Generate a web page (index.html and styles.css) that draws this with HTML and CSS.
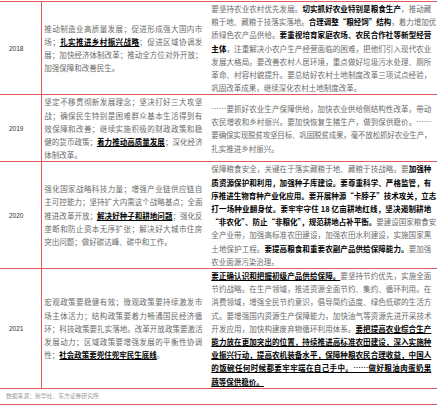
FILE: index.html
```html
<!DOCTYPE html>
<html lang="zh-CN">
<head>
<meta charset="utf-8">
<link rel="stylesheet" href="styles.css">
</head>
<body>
<div class="tbl">
  <div class="row">
    <div class="yr">2018</div>
    <div class="lc">
      <span class="ln">推动制造业高质量发展；促进形成强大国内市</span>
      <span class="ln">场；<strong class="b u">扎实推进乡村振兴战略</strong>；促进区域协调发</span>
      <span class="ln t">展；加快经济体制改革；推动全方位对外开放；</span>
      <span class="ln e">加强保障和改善民生。</span>
    </div>
    <div class="rc">
      <span class="ln">要坚持农业农村优先发展。<strong class="b">切实抓好农业特别是粮食生产</strong>，推动藏</span>
      <span class="ln">粮于地、藏粮于技落实落地。<strong class="b">合理调整“粮经饲”结构</strong>，着力增加优</span>
      <span class="ln">质绿色农产品供给。<strong class="b">要重视培育家庭农场、农民合作社等新型经营</strong></span>
      <span class="ln"><strong class="b">主体</strong>，注重解决小农户生产经营面临的困难，把他们引入现代农业</span>
      <span class="ln">发展大格局。要改善农村人居环境，重点做好垃圾污水处理、厕所</span>
      <span class="ln">革命、村容村貌提升。要总结好农村土地制度改革三项试点经验，</span>
      <span class="ln e">巩固改革成果，继续深化农村土地制度改革。</span>
    </div>
  </div>
  <div class="row">
    <div class="yr">2019</div>
    <div class="lc">
      <span class="ln">坚定不移贯彻新发展理念；坚决打好三大攻坚</span>
      <span class="ln">战；确保民生特别是困难群众基本生活得到有</span>
      <span class="ln">效保障和改善；继续实施积极的财政政策和稳</span>
      <span class="ln t">健的货币政策；<strong class="b u">着力推动高质量发展</strong>；深化经济</span>
      <span class="ln e">体制改革。</span>
    </div>
    <div class="rc">
      <span class="ln">……要抓好农业生产保障供给，加快农业供给侧结构性改革，带动</span>
      <span class="ln">农民增收和乡村振兴。要加快恢复生猪生产，做到保供稳价。……</span>
      <span class="ln t">要确保实现脱贫攻坚目标、巩固脱贫成果，毫不放松抓好农业生产，</span>
      <span class="ln e">扎实推进乡村振兴。</span>
    </div>
  </div>
  <div class="row">
    <div class="yr">2020</div>
    <div class="lc">
      <span class="ln">强化国家战略科技力量；增强产业链供应链自</span>
      <span class="ln t">主可控能力；坚持扩大内需这个战略基点；全面</span>
      <span class="ln t">推进改革开放；<strong class="b u">解决好种子和耕地问题</strong>；强化反</span>
      <span class="ln">垄断和防止资本无序扩张；解决好大城市住房</span>
      <span class="ln e">突出问题；做好碳达峰、碳中和工作。</span>
    </div>
    <div class="rc">
      <span class="ln">保障粮食安全，关键在于落实藏粮于地、藏粮于技战略。要<strong class="b">加强种</strong></span>
      <span class="ln"><strong class="b">质资源保护和利用，加强种子库建设。要尊重科学、严格监管，有</strong></span>
      <span class="ln"><strong class="b">序推进生物育种产业化应用。要开展种源“卡脖子”技术攻关，立志</strong></span>
      <span class="ln"><strong class="b">打一场种业翻身仗。要牢牢守住 18 亿亩耕地红线，坚决遏制耕地</strong></span>
      <span class="ln"><strong class="b">“非农化”、防止“非粮化”，规范耕地占补平衡。</strong>要建设国家粮食安</span>
      <span class="ln">全产业带，加强高标准农田建设，加强农田水利建设，实施国家黑</span>
      <span class="ln">土地保护工程。<strong class="b">要提高粮食和重要农副产品供给保障能力。</strong>要加强</span>
      <span class="ln e">农业面源污染治理。</span>
    </div>
  </div>
  <div class="row">
    <div class="yr">2021</div>
    <div class="lc">
      <span class="ln">宏观政策要稳健有效；微观政策要持续激发市</span>
      <span class="ln">场主体活力；结构政策要着力畅通国民经济循</span>
      <span class="ln t">环；科技政策要扎实落地。改革开放政策要激活</span>
      <span class="ln">发展动力；区域政策要增强发展的平衡性协调</span>
      <span class="ln e">性；<strong class="b u">社会政策要兜住兜牢民生底线</strong>。</span>
    </div>
    <div class="rc">
      <span class="ln"><strong class="b u">要正确认识和把握初级产品供给保障。</strong>要坚持节约优先，实施全面</span>
      <span class="ln">节约战略。在生产领域，推进资源全面节约、集约、循环利用。在</span>
      <span class="ln">消费领域，增强全民节约意识，倡导简约适度、绿色低碳的生活方</span>
      <span class="ln t">式。要增强国内资源生产保障能力，加快油气等资源先进开采技术</span>
      <span class="ln">开发应用，加快构建废弃物循环利用体系。<strong class="b u">要把提高农业综合生产</strong></span>
      <span class="ln"><strong class="b u">能力放在更加突出的位置，持续推进高标准农田建设，深入实施种</strong></span>
      <span class="ln"><strong class="b u">业振兴行动，提高农机装备水平，保障种粮农民合理收益，中国人</strong></span>
      <span class="ln"><strong class="b u">的饭碗任何时候都要牢牢端在自己手中。……做好粮油肉蛋奶果</strong></span>
      <span class="ln e"><strong class="b u">蔬等保供稳价。</strong></span>
    </div>
  </div>
</div>
<div class="src">数据来源：新华社、东方证券研究所</div>
</body>
</html>
```

FILE: styles.css
```css
html, body {
  margin: 0;
  padding: 0;
  background: #ffffff;
}

body {
  width: 437px;
  font-family: "Noto Sans CJK SC", "Noto Sans", sans-serif;
}

.tbl {
  margin-top: 1px;
  border-top: 1px solid #df5b5b;
}

.row {
  display: flex;
  border-bottom: 1px solid #df5b5b;
}

.yr {
  flex: none;
  width: 42px;
  box-sizing: border-box;
  border-right: 1px solid #df5b5b;
  padding-left: 9px;
  display: flex;
  align-items: center;
  font-family: "Liberation Sans", Arial, sans-serif;
  font-size: 6.5px;
  color: #333333;
}

.lc {
  flex: none;
  width: 158px;
  margin: 0 9px 0 2.3px;
  align-self: center;
}

.rc {
  flex: none;
  width: 220px;
  align-self: center;
}

.ln {
  display: block;
  font-size: 7.5px;
  line-height: 13.2px;
  color: #6b6b6b;
  text-align: justify;
  text-align-last: justify;
  white-space: nowrap;
}

.ln.e {
  text-align: left;
  text-align-last: left;
}

.ln.t {
  letter-spacing: -0.25px;
}

.b {
  font-weight: 700;
  color: #000000;
}

.u {
  text-decoration: underline;
  text-decoration-thickness: 0.8px;
  text-underline-offset: 1px;
}

.src {
  font-size: 5.8px;
  line-height: 14px;
  color: #9a9a9a;
  padding-left: 6px;
  padding-bottom: 1px;
  border-bottom: 1px solid #df5b5b;
}
```
